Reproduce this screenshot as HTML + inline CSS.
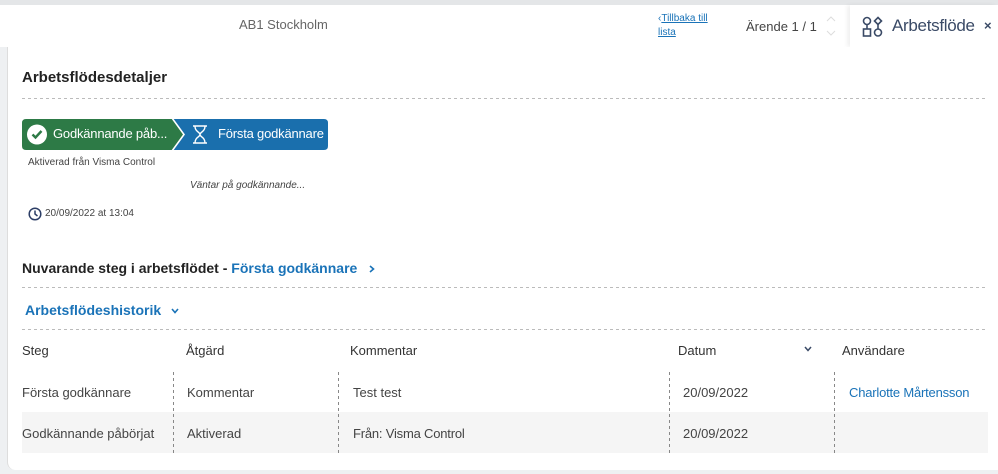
<!DOCTYPE html>
<html><head><meta charset="utf-8"><style>
*{margin:0;padding:0;box-sizing:border-box}
body{width:998px;height:474px;background:#eef0f2;font-family:"Liberation Sans",sans-serif;color:#333;position:relative;overflow:hidden;font-size:13px}
.abs{position:absolute}
.top{left:0;top:5px;width:998px;height:42px;background:#fff}
.panel{left:7px;top:47px;width:991px;height:423px;background:#fff;border-radius:0 0 0 8px;border-left:1px solid #ddd}
.dash{position:absolute;left:22px;width:966px;height:1px;background:repeating-linear-gradient(90deg,#bbb 0 3px,transparent 3px 6px)}
.vd{position:absolute;width:1px;background:repeating-linear-gradient(180deg,#888 0 3px,transparent 3px 6px)}
.t{letter-spacing:-0.2px}
</style></head><body>
<div class="abs" style="left:0;top:0;width:998px;height:5px;background:#e4e6e8"></div>
<div class="abs top"></div>
<div class="abs" style="left:239px;top:17px;color:#666;font-size:13px">AB1 Stockholm</div>
<div class="abs" style="left:658px;top:12px;font-size:10px;line-height:14px;color:#1a73b8"><span>‹</span><u>Tillbaka till</u><br><u>lista</u></div>
<div class="abs" style="left:746px;top:19px;font-size:13px;color:#444">Ärende 1 / 1</div>
<svg class="abs" style="left:826px;top:16px" width="10" height="20" fill="none" stroke="#ddd" stroke-width="1"><path d="M1 5 L5 1 L9 5 M1 15 L5 19 L9 15"/></svg>
<div class="abs" style="left:850px;top:5px;width:148px;height:42px;background:#fff;box-shadow:-3px 0 4px rgba(0,0,0,0.06)"></div>
<svg class="abs" style="left:862px;top:16px" width="22" height="22" viewBox="0 0 22 22" fill="none" stroke="#3a4a66" stroke-width="1.6"><circle cx="5" cy="5" r="3.5"/><path d="M16 1.5 L19.5 5 L16 8.5 L12.5 5Z"/><rect x="1.5" y="13" width="7" height="7"/><circle cx="16" cy="16.5" r="3.5"/><path d="M5 8.5v4.5M16 8.5v4.5"/></svg>
<div class="abs" style="left:892px;top:16px;font-size:17px;color:#3a4a66;letter-spacing:-0.3px">Arbetsflöde</div>
<div class="abs" style="left:984px;top:18px;font-size:13px;color:#3a4a66;font-weight:bold">×</div>
<div class="abs panel"></div>
<div class="abs" style="left:22px;top:69px;font-size:15px;font-weight:bold;color:#222">Arbetsflödesdetaljer</div>
<div class="dash" style="top:98px"></div>
<svg class="abs" style="left:22px;top:119px" width="306" height="31">
<path d="M150 0 H302 Q306 0 306 4 V27 Q306 31 302 31 H150Z" fill="#1a6fad"/>
<path d="M4 0 H150 L162 15.5 L150 31 H4 Q0 31 0 27 V4 Q0 0 4 0Z" fill="#2d7a46"/>
<path d="M150 -1 L162 15.5 L150 32" stroke="#fff" stroke-width="1.6" fill="none"/>
<circle cx="15" cy="15.5" r="10" fill="#fff"/><path d="M10.5 15.5 l3 3 l6 -6.5" stroke="#2d7a46" stroke-width="2.4" fill="none"/>
<path d="M171 7 h14 M171 24 h14 M173 7 c0 6 5 6 5 8.5 c0 2.5 -5 2.5 -5 8.5 M183 7 c0 6 -5 6 -5 8.5 c0 2.5 5 2.5 5 8.5" stroke="#fff" stroke-width="1.4" fill="none"/>
</svg>
<div class="abs t" style="left:53px;top:126px;color:#fff;font-size:13px">Godkännande påb...</div>
<div class="abs t" style="left:218px;top:126px;color:#fff;font-size:13px">Första godkännare</div>
<div class="abs" style="left:28px;top:157px;font-size:10px;color:#444">Aktiverad från Visma Control</div>
<div class="abs" style="left:190px;top:180px;font-size:10px;color:#444;font-style:italic">Väntar på godkännande...</div>
<svg class="abs" style="left:28px;top:207px" width="14" height="14" fill="none" stroke="#2c3e66" stroke-width="1.5"><circle cx="7" cy="7" r="5.8"/><path d="M7 3.5V7l2.5 2"/></svg>
<div class="abs" style="left:45px;top:208px;font-size:10px;color:#444">20/09/2022 at 13:04</div>
<div class="abs" style="left:22px;top:260px;font-size:14px;font-weight:bold;color:#222">Nuvarande steg i arbetsflödet - <span style="color:#1a73b8">Första godkännare</span></div>
<svg class="abs" style="left:369px;top:265px" width="6" height="8" fill="none" stroke="#1a73b8" stroke-width="1.6"><path d="M1 1 L4.5 4 L1 7"/></svg>
<div class="dash" style="top:287px"></div>
<div class="abs" style="left:25px;top:302px;font-size:14px;font-weight:bold;color:#1a73b8">Arbetsflödeshistorik</div>
<svg class="abs" style="left:171px;top:308px" width="8" height="6" fill="none" stroke="#1a73b8" stroke-width="1.6"><path d="M1 1 L4 4.5 L7 1"/></svg>
<div class="dash" style="top:329px"></div>
<div class="abs" style="left:22px;top:343px;font-size:13px">Steg</div>
<div class="abs" style="left:186px;top:343px;font-size:13px">Åtgärd</div>
<div class="abs" style="left:350px;top:343px;font-size:13px">Kommentar</div>
<div class="abs" style="left:678px;top:343px;font-size:13px">Datum</div>
<svg class="abs" style="left:804px;top:346px" width="8" height="6" fill="none" stroke="#3a4a66" stroke-width="1.5"><path d="M1 1 L4 4.5 L7 1"/></svg>
<div class="abs" style="left:842px;top:343px;font-size:13px">Användare</div>
<div class="abs" style="left:22px;top:412px;width:966px;height:41px;background:#f5f5f5"></div>
<div class="vd" style="left:173px;top:372px;height:81px"></div>
<div class="vd" style="left:338px;top:372px;height:81px"></div>
<div class="vd" style="left:669px;top:372px;height:81px"></div>
<div class="vd" style="left:834px;top:372px;height:81px"></div>
<div class="abs" style="left:22px;top:385px;color:#444">Första godkännare</div>
<div class="abs" style="left:187px;top:385px;color:#444">Kommentar</div>
<div class="abs" style="left:353px;top:385px;color:#444">Test test</div>
<div class="abs" style="left:683px;top:385px;color:#444">20/09/2022</div>
<div class="abs t" style="left:849px;top:385px;color:#1a73b8">Charlotte Mårtensson</div>
<div class="abs" style="left:22px;top:426px;color:#444">Godkännande påbörjat</div>
<div class="abs" style="left:187px;top:426px;color:#444">Aktiverad</div>
<div class="abs t" style="left:353px;top:426px;color:#444">Från: Visma Control</div>
<div class="abs" style="left:683px;top:426px;color:#444">20/09/2022</div>
</body></html>
